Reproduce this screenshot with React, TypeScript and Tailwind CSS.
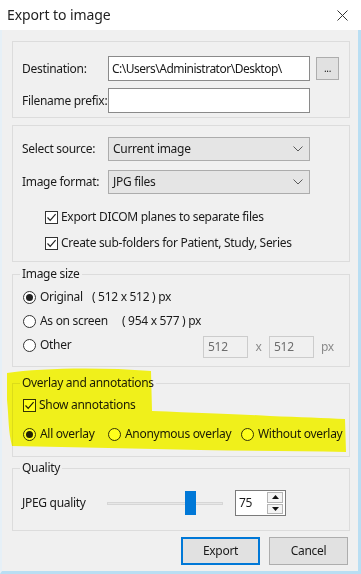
import React from "react";

function Check() {
  return (
    <span className="w-[13px] h-[13px] border border-[#333] bg-white flex items-center justify-center shrink-0">
      <svg width="11" height="11" viewBox="0 0 11 11">
        <path d="M1.5 5.5 L4.2 8.3 L9.6 2.2" fill="none" stroke="#222" strokeWidth="1.2" />
      </svg>
    </span>
  );
}

function Radio({ on }: { on?: boolean }) {
  return (
    <span className="w-[13px] h-[13px] rounded-full border border-[#333] bg-white flex items-center justify-center shrink-0">
      {on && <span className="w-[7px] h-[7px] rounded-full bg-[#222]" />}
    </span>
  );
}

function Chevron() {
  return (
    <svg width="10" height="6" viewBox="0 0 10 6" className="shrink-0">
      <path d="M0.5 0.5 L5 5 L9.5 0.5" fill="none" stroke="#5a5a5a" strokeWidth="1" />
    </svg>
  );
}

export default function App() {
  return (
    <div className="relative w-[361px] h-[574px] bg-[#f0f0f0] flex flex-col font-['Noto_Sans',sans-serif] text-[12px] leading-[16px] text-[#1a1a1a] tracking-[-0.3px] overflow-hidden">
      {/* title bar */}
      <div className="h-[30px] bg-white flex items-center shrink-0">
        <span className="ml-[7px] text-[14px] tracking-[-0.1px] text-[#222]">Export to image</span>
        <svg width="11" height="11" viewBox="0 0 11 11" className="ml-auto mr-[13px]">
          <path d="M0.5 0.5 L10.5 10.5 M10.5 0.5 L0.5 10.5" stroke="#333" strokeWidth="1" />
        </svg>
      </div>

      <div className="flex-1 flex flex-col border-l-[2px] border-r-[3px] border-b-[3px] border-l-[#e6f0f7] border-r-[#b9def3] border-b-[#b9def3]">
        {/* Group 1 */}
        <div className="mt-[11px] ml-[10px] w-[338px] h-[77px] border border-[#dcdcdc] pt-[14px] pl-[9px] flex flex-col gap-[7px]">
          <div className="flex items-center h-[25px]">
            <span className="w-[86px]">Destination:</span>
            <div className="w-[202px] h-[25px] bg-white border border-[#8a8a8a] flex items-center pl-[3px] tracking-[-0.5px]">
              C:\Users\Administrator\Desktop\
            </div>
            <div className="ml-[6px] w-[23px] h-[23px] bg-[#e1e1e1] border border-[#adadad] flex items-center justify-center text-[10px] leading-none pb-[2px]">
              ...
            </div>
          </div>
          <div className="flex items-center h-[25px]">
            <span className="w-[86px] whitespace-nowrap">Filename prefix:</span>
            <div className="w-[202px] h-[25px] bg-white border border-[#8a8a8a]" />
          </div>
        </div>

        {/* Group 2 */}
        <div className="mt-[7px] ml-[10px] w-[338px] h-[137px] border border-[#dcdcdc] pt-[11px] pl-[9px] flex flex-col">
          <div className="flex items-center h-[24px]">
            <span className="w-[86px]">Select source:</span>
            <div className="w-[202px] h-[24px] bg-[#e5e5e5] border border-[#acacac] flex items-center pl-[4px] pr-[6px] justify-between">
              <span>Current image</span>
              <Chevron />
            </div>
          </div>
          <div className="flex items-center h-[24px] mt-[9px]">
            <span className="w-[86px]">Image format:</span>
            <div className="w-[202px] h-[24px] bg-[#e5e5e5] border border-[#acacac] flex items-center pl-[4px] pr-[6px] justify-between">
              <span>JPG files</span>
              <Chevron />
            </div>
          </div>
          <div className="flex items-center h-[16px] mt-[15px] ml-[23px] gap-[3px]">
            <Check />
            <span>Export DICOM planes to separate files</span>
          </div>
          <div className="flex items-center h-[16px] mt-[10px] ml-[23px] gap-[3px]">
            <Check />
            <span>Create sub-folders for Patient, Study, Series</span>
          </div>
        </div>

        {/* Group 3 */}
        <fieldset className="mt-[4px] ml-[10px] w-[338px] h-[101px] border border-[#dcdcdc] pt-[3px] pl-[10px] flex flex-col">
          <legend className="-ml-[3px] px-[2px] leading-[16px]">Image size</legend>
          <div className="flex items-center h-[24px]">
            <Radio on />
            <span className="ml-[4px] w-[52px]">Original</span>
            <span>( 512 x 512 ) px</span>
          </div>
          <div className="flex items-center h-[24px]">
            <Radio />
            <span className="ml-[4px] w-[82px]">As on screen</span>
            <span>( 954 x 577 ) px</span>
          </div>
          <div className="flex items-center h-[24px]">
            <Radio />
            <span className="ml-[4px] w-[163px]">Other</span>
            <div className="w-[45px] h-[22px] mt-[4px] border border-[#cccccc] bg-[#f0f0f0] text-[#6d6d6d] pl-[4px] flex items-center">512</div>
            <span className="w-[21px] text-center text-[#8a8a8a] mt-[4px]">x</span>
            <div className="w-[45px] h-[22px] mt-[4px] border border-[#cccccc] bg-[#f0f0f0] text-[#6d6d6d] pl-[4px] flex items-center">512</div>
            <span className="ml-[7px] text-[#8a8a8a] mt-[4px]">px</span>
          </div>
        </fieldset>

        {/* Group 4 */}
        <fieldset className="mt-[8px] ml-[10px] w-[338px] h-[82px] border border-[#dcdcdc] pt-[6px] pl-[10px] flex flex-col">
          <legend className="-ml-[3px] px-[2px] leading-[16px]">Overlay and annotations</legend>
          <div className="flex items-center h-[16px] gap-[3px]">
            <Check />
            <span>Show annotations</span>
          </div>
          <div className="flex items-center h-[16px] mt-[13px]">
            <div className="w-[85px] flex items-center">
              <Radio on />
              <span className="ml-[4px]">All overlay</span>
            </div>
            <div className="w-[133px] flex items-center">
              <Radio />
              <span className="ml-[4px]">Anonymous overlay</span>
            </div>
            <div className="flex items-center">
              <Radio />
              <span className="ml-[4px]">Without overlay</span>
            </div>
          </div>
        </fieldset>

        {/* Group 5 */}
        <fieldset className="mt-[3px] ml-[10px] w-[338px] h-[71px] border border-[#dcdcdc] pt-[14px] pl-[9px] flex flex-col">
          <legend className="-ml-[2px] px-[2px] leading-[16px]">Quality</legend>
          <div className="flex items-center h-[26px]">
            <span className="w-[85px]">JPEG quality</span>
            <div className="relative w-[116px] h-[26px] flex items-center">
              <div className="w-full h-[3px] bg-[#e7e7e7] border border-[#d6d6d6]" />
              <div className="absolute left-[78px] top-[1px] w-[11px] h-[24px] bg-[#0078d7]" />
            </div>
            <div className="ml-[12px] w-[51px] h-[26px] bg-white border border-[#7a7a7a] flex items-center">
              <span className="ml-[3px] flex-1">75</span>
              <div className="w-[16px] h-[22px] mr-[2px] flex flex-col gap-[1px]">
                <div className="flex-1 border border-[#b5b5b5] bg-[#f4f4f4] flex items-center justify-center">
                  <svg width="7" height="4" viewBox="0 0 7 4"><path d="M0 4 L3.5 0 L7 4 Z" fill="#111" /></svg>
                </div>
                <div className="flex-1 border border-[#b5b5b5] bg-[#f4f4f4] flex items-center justify-center">
                  <svg width="7" height="4" viewBox="0 0 7 4"><path d="M0 0 L7 0 L3.5 4 Z" fill="#111" /></svg>
                </div>
              </div>
            </div>
          </div>
        </fieldset>

        {/* Buttons */}
        <div className="mt-[6px] flex justify-end gap-[9px] pr-[10px]">
          <div className="w-[79px] h-[28px] bg-[#e1e1e1] border-[2px] border-[#0078d7] flex items-center justify-center">Export</div>
          <div className="w-[79px] h-[28px] bg-[#e1e1e1] border border-[#adadad] flex items-center justify-center">Cancel</div>
        </div>
      </div>

      {/* yellow highlighter marking */}
      <svg
        className="absolute left-0 top-0 pointer-events-none mix-blend-multiply"
        width="361"
        height="574"
        viewBox="0 0 361 574"
      >
        <path
          d="M7 373 C40 368 100 367 151 371 L152 411 C200 413 240 414 270 416 C300 417 325 418 345 419 L346 452 C300 451 250 451 200 450 C140 449 80 447 12 446 C8 430 9 420 7 400 Z"
          fill="#ffff10"
          opacity="0.95"
        />
      </svg>
    </div>
  );
}
